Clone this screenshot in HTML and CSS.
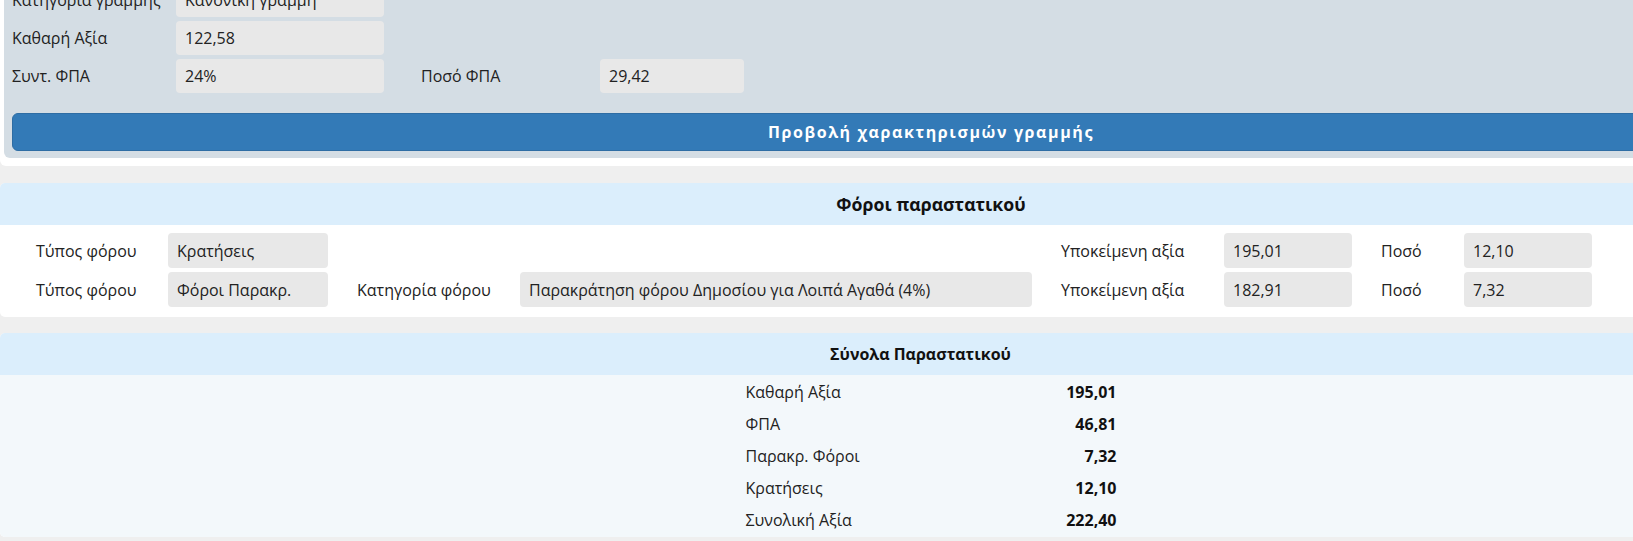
FILE: index.html
```html
<!DOCTYPE html>
<html lang="el">
<head>
  <meta charset="UTF-8" />
  <title>Παραστατικό - Γραμμές και Σύνολα</title>
  <meta name="viewport" content="width=device-width, initial-scale=1.0" />
  <link rel="stylesheet" href="styles.css">
</head>
<body>

<div class="page">

  <!-- Line details -->
  <section class="line-card">
    <div class="line-panel">
      <div class="line-grid">
        <div class="lbl">Κατηγορία γραμμής</div>
        <div class="val">Κανονική γραμμή</div>
        <div></div><div></div>

        <div class="lbl">Καθαρή Αξία</div>
        <div class="val">122,58</div>
        <div></div><div></div>

        <div class="lbl">Συντ. ΦΠΑ</div>
        <div class="val">24%</div>
        <div class="lbl lbl-gap">Ποσό ΦΠΑ</div>
        <div class="val">29,42</div>
      </div>
      <button class="btn-primary">Προβολή χαρακτηρισμών γραμμής</button>
    </div>
  </section>

  <!-- Taxes -->
  <section class="card">
    <h3 class="card-head">Φόροι παραστατικού</h3>
    <div class="tax-grid">
      <div class="lbl">Τύπος φόρου</div>
      <div class="val">Κρατήσεις</div>
      <div></div><div></div>
      <div class="lbl">Υποκείμενη αξία</div>
      <div class="val">195,01</div>
      <div class="lbl">Ποσό</div>
      <div class="val">12,10</div>

      <div class="lbl">Τύπος φόρου</div>
      <div class="val">Φόροι Παρακρ.</div>
      <div class="lbl">Κατηγορία φόρου</div>
      <div class="val">Παρακράτηση φόρου Δημοσίου για Λοιπά Αγαθά (4%)</div>
      <div class="lbl">Υποκείμενη αξία</div>
      <div class="val">182,91</div>
      <div class="lbl">Ποσό</div>
      <div class="val">7,32</div>
    </div>
  </section>

  <!-- Totals -->
  <section class="card totals">
    <h4 class="card-head small">Σύνολα Παραστατικού</h4>
    <div class="totals-body">
      <div class="totals-grid">
        <span>Καθαρή Αξία</span><b>195,01</b>
        <span>ΦΠΑ</span><b>46,81</b>
        <span>Παρακρ. Φόροι</span><b>7,32</b>
        <span>Κρατήσεις</span><b>12,10</b>
        <span>Συνολική Αξία</span><b>222,40</b>
      </div>
    </div>
  </section>

</div>

</body>
</html>
```

FILE: styles.css
```css
* {
  margin: 0; padding: 0; box-sizing: border-box;
  font-family: 'Open Sans', 'Noto Sans', sans-serif;
}

body {
  background-color: #efefef;
  color: #222;
  font-size: 16px;
  overflow: hidden;
}

.page {
  width: 1862px;
}

/* line details */
.line-card {
  background: white;
  margin-top: -25px;
  padding: 0 4px 8px;
  border-radius: 0 0 6px 6px;
}

.line-panel {
  background: #d4dde4;
  padding: 8px 8px 7px;
  border-radius: 0 0 6px 6px;
}

.line-grid {
  display: grid;
  grid-template-columns: 164px 208px 216px 144px;
  grid-auto-rows: 34px;
  row-gap: 4px;
  align-items: center;
}

.lbl { white-space: nowrap; }
.lbl-gap { padding-left: 37px; }

.val {
  background: #e8e8e8;
  border-radius: 4px;
  height: 100%;
  padding: 0 9px;
  display: flex;
  align-items: center;
  white-space: nowrap;
}

.btn-primary {
  display: block;
  width: 100%;
  height: 38px;
  margin-top: 20px;
  background: #337ab7;
  border: 1px solid #2e6da4;
  border-radius: 6px;
  color: white;
  font-weight: bold;
  font-size: 16px;
  letter-spacing: 1.6px;
}

/* cards */
.card {
  background: white;
  border-radius: 5px;
  margin-top: 17px;
  overflow: hidden;
}

.card.totals { margin-top: 16px; }

.card-head {
  background: #dbeefc;
  height: 42px;
  display: flex;
  align-items: center;
  justify-content: center;
  font-size: 17.7px;
  font-weight: bold;
  color: #111;
}

.card-head.small {
  font-size: 16px;
  padding-right: 21px;
}

.tax-grid {
  display: grid;
  grid-template-columns: 161px 160px 192px 512px 192px 128px 112px 128px;
  grid-auto-rows: 35px;
  row-gap: 4px;
  align-items: center;
  padding: 8px 0 10px 7px;
}

.tax-grid .lbl { padding-left: 29px; }

/* totals */
.totals-body {
  background: #f3f8fb;
  padding-top: 1px;
  padding-bottom: 1px;
}

.totals-grid {
  width: 371px;
  margin: 0 auto;
  display: grid;
  grid-template-columns: 1fr auto;
  grid-auto-rows: 32px;
  align-items: center;
}

.totals-grid b {
  text-align: right;
  color: #111;
}
```
